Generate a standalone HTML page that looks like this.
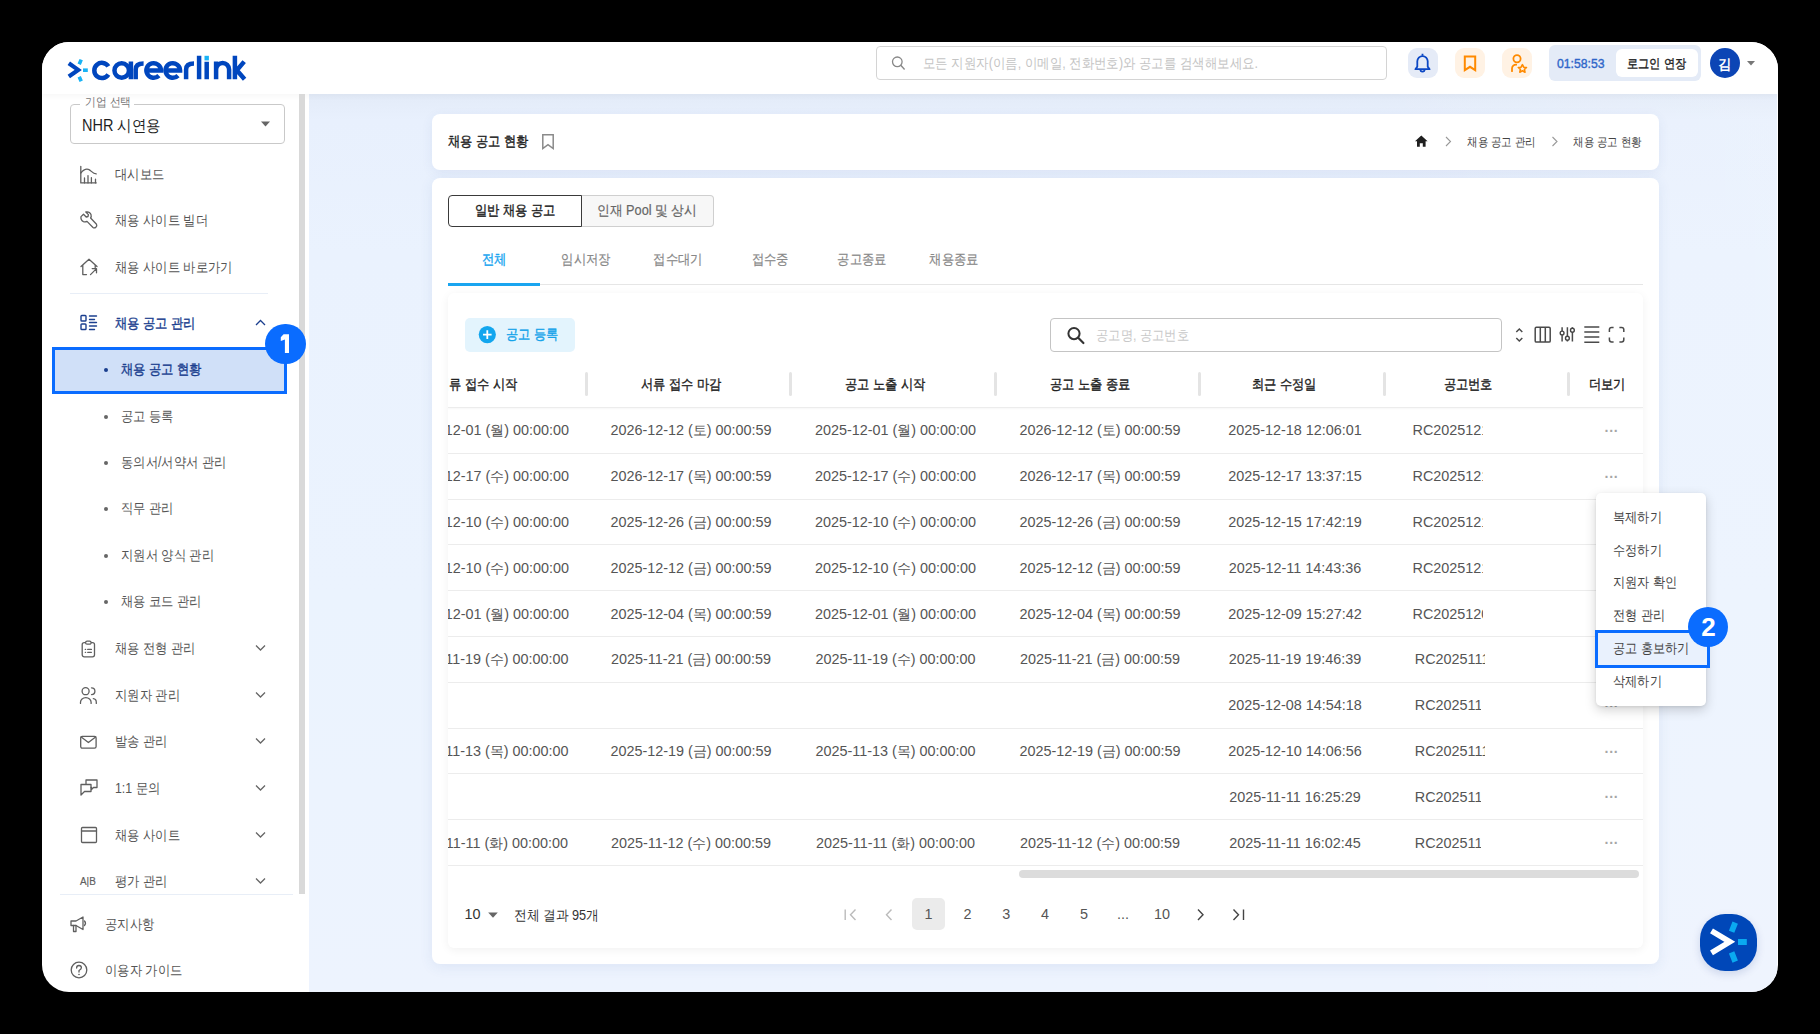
<!DOCTYPE html>
<html><head><meta charset="utf-8">
<style>
*{box-sizing:border-box;margin:0;padding:0}
html,body{width:1820px;height:1034px;overflow:hidden;background:#000}
body{font-family:"Liberation Sans",sans-serif;color:#333;position:relative}
.win{position:absolute;left:0;top:0;width:1820px;height:1034px;background:#fff;clip-path:inset(42px 42px 42px 42px round 27px)}
.a{position:absolute}
.t{position:absolute;white-space:nowrap}
svg{position:absolute;overflow:visible}
</style></head><body>
<div class="win">
<div class="a" style="left:309px;top:94px;width:1468px;height:898px;background:linear-gradient(180deg,#e3ebf8 0px,#e8f0fd 26px,#eaf2fe 160px,#ebf3fe 500px,#edf3fe 898px)"></div>
<div class="a" style="left:309px;top:94px;width:1468px;height:898px;background:linear-gradient(90deg,rgba(255,255,255,0) 0%,rgba(255,255,255,0) 70%,rgba(255,255,255,0.12) 100%)"></div>
<div class="a" style="left:42px;top:42px;width:1736px;height:52px;background:#fff;box-shadow:0 2px 6px rgba(0,0,0,0.04)"></div>
<svg style="left:60px;top:50px;" width="190" height="36" viewBox="60 50 190 36">
<path d="M68.8,63.2 L78.2,69.9 L68.8,76.4" fill="none" stroke="#0046be" stroke-width="4.2" stroke-linejoin="miter"/>
<path d="M81.2,59.6 L79.2,64.2 M79.2,76.7 L81.2,81.3" stroke="#19b3f5" stroke-width="3.6"/>
<rect x="83" y="68.4" width="4.8" height="3.6" fill="#19b3f5"/>
<g fill="none" stroke="#0046be" stroke-width="4.5">
<path d="M108.35,66.4 A7.6,7.6 0 1 0 108.35,74.5"/>
<circle cx="121.7" cy="70.45" r="7.25"/>
<path d="M130.9,61.6 V79.3"/>
<path d="M135.7,79.3 V69.5 Q135.7,63.6 143.6,63.6"/>
<path d="M146.3,70.45 H161 A7.3,7.3 0 1 0 158.9,75.6"/>
<path d="M165.4,70.45 H180.1 A7.3,7.3 0 1 0 178,75.6"/>
<path d="M186.1,79.3 V69.5 Q186.1,63.6 194,63.6"/>
<path d="M199.1,55.8 V79.3"/>
<path d="M206.7,61.8 V79.3"/>
<path d="M216.1,79.3 V61.6 M216.1,69.5 A6.5,6.5 0 0 1 229.1,69.5 V79.3"/>
<path d="M234.9,55.8 V79.3 M244.2,61.6 L236.8,70.2 L244.6,79.3"/>
</g>
<rect x="204.5" y="55.8" width="4.4" height="4.6" fill="#19b3f5"/>
</svg>
<div class="a" style="left:876px;top:46px;width:511px;height:34px;border:1px solid #d4d4d4;border-radius:4px;background:#fff"></div>
<svg style="left:890px;top:55px;" width="18" height="18" viewBox="890 55 18 18"><circle cx="897.3" cy="61.8" r="4.8" fill="none" stroke="#888" stroke-width="1.3"/><path d="M900.8,65.3 L904.6,69.4" stroke="#888" stroke-width="1.4"/></svg>
<div class="t" style="left:923px;top:54.0px;font-size:14px;line-height:18px;height:18px;font-weight:400;color:#c4c4c4;transform:scaleX(0.89);transform-origin:left center;">모든 지원자(이름, 이메일, 전화번호)와 공고를 검색해보세요.</div>
<div class="a" style="left:1408px;top:48px;width:30px;height:30px;background:#e5ebf7;border-radius:9px"></div>
<svg style="left:1408px;top:48px;" width="30" height="30" viewBox="1408 48 30 30"><path d="M1417.3,66.6 V61.2 A5.2,5.2 0 0 1 1427.7,61.2 V66.6 L1429.6,69.2 H1415.4 Z" fill="none" stroke="#0b47c4" stroke-width="1.8" stroke-linejoin="round"/><path d="M1422.5,53.8 V55.8" stroke="#0b47c4" stroke-width="1.8"/><path d="M1420.4,69.6 A2.1,2.1 0 0 0 1424.6,69.6" fill="none" stroke="#0b47c4" stroke-width="1.8"/></svg>
<div class="a" style="left:1455px;top:48px;width:30px;height:30px;background:#fff2e4;border-radius:9px"></div>
<svg style="left:1455px;top:48px;" width="30" height="30" viewBox="1455 48 30 30"><path d="M1464.8,56.6 H1475.2 V70.2 L1470,66.8 L1464.8,70.2 Z" fill="none" stroke="#ff8a00" stroke-width="2" stroke-linejoin="miter"/></svg>
<div class="a" style="left:1502px;top:48px;width:30px;height:30px;background:#fff2e4;border-radius:9px"></div>
<svg style="left:1502px;top:48px;" width="30" height="30" viewBox="1502 48 30 30"><circle cx="1517" cy="58.8" r="3.6" fill="none" stroke="#ff8a00" stroke-width="1.8"/><path d="M1512,71.2 V68.5 A4,4 0 0 1 1516.2,64.6" fill="none" stroke="#ff8a00" stroke-width="1.8" stroke-linecap="round"/><path d="M1522.4,64.6 L1523.7,67.2 L1526.5,67.5 L1524.4,69.4 L1525,72.2 L1522.4,70.8 L1519.8,72.2 L1520.4,69.4 L1518.3,67.5 L1521.1,67.2 Z" fill="none" stroke="#ff8a00" stroke-width="1.6" stroke-linejoin="round"/></svg>
<div class="a" style="left:1549px;top:45px;width:152px;height:36px;background:#e4ebf7;border-radius:6px"></div>
<div class="a" style="left:1616px;top:49px;width:82px;height:28px;background:#fff;border-radius:6px"></div>
<div class="t" style="left:1557px;top:54.5px;font-size:13px;line-height:17px;height:17px;font-weight:400;color:#2f66c9;-webkit-text-stroke:0.38px #2f66c9;transform:scaleX(0.94);transform-origin:left center;">01:58:53</div>
<div class="t" style="left:1627px;top:54.5px;font-size:13px;line-height:17px;height:17px;font-weight:400;color:#222;-webkit-text-stroke:0.38px #222;transform:scaleX(0.86);transform-origin:left center;">로그인 연장</div>
<div class="a" style="left:1710px;top:48px;width:30px;height:30px;background:#0c45b5;border-radius:50%"></div>
<div class="t" style="left:1225px;width:1000px;text-align:center;top:54.5px;font-size:14px;line-height:18px;height:18px;font-weight:700;color:#fff;transform:scaleX(0.95);transform-origin:center center;">김</div>
<svg style="left:1745px;top:58px;" width="12" height="10" viewBox="1745 58 12 10"><path d="M1747,61 L1755,61 L1751,65.5 Z" fill="#777"/></svg>
<div class="a" style="left:299px;top:94px;width:6px;height:800px;background:#d9d9d9"></div>
<div class="a" style="left:70px;top:104px;width:215px;height:40px;border:1px solid #c9c9c9;border-radius:4px"></div>
<div class="a" style="left:80px;top:102px;width:54px;height:4px;background:#fff"></div>
<div class="t" style="left:84.5px;top:93.9px;font-size:12px;line-height:16px;height:16px;font-weight:400;color:#777;transform:scaleX(0.9);transform-origin:left center;">기업 선택</div>
<div class="t" style="left:82px;top:114.5px;font-size:16px;line-height:21px;height:21px;font-weight:400;color:#1f1f1f;transform:scaleX(0.905);transform-origin:left center;">NHR 시연용</div>
<svg style="left:258px;top:118px;" width="16" height="12" viewBox="258 118 16 12"><path d="M261,121.5 L270,121.5 L265.5,126.5 Z" fill="#666"/></svg>
<svg style="left:80px;top:164.5px" width="18" height="18" viewBox="0 0 18 18"><path d="M0.8,1.3 V17.9 H16.2" fill="none" stroke="#5f5f5f" stroke-width="1.3" stroke-linecap="round" stroke-linejoin="round"/><path d="M0.8,8 C3.5,4.6 6,3.4 8.5,4.4 C11.2,5.4 12.5,8.6 16.2,8.9" fill="none" stroke="#5f5f5f" stroke-width="1.3" stroke-linecap="round" stroke-linejoin="round"/><path d="M4.5,17.9 V13 M8,17.9 V10.6 M11.4,17.9 V12.6 M15.5,17.9 V14.2" fill="none" stroke="#5f5f5f" stroke-width="1.3" stroke-linecap="round" stroke-linejoin="round"/></svg>
<div class="t" style="left:115px;top:164.5px;font-size:14px;line-height:18px;height:18px;font-weight:400;color:#555;transform:scaleX(0.88);transform-origin:left center;">대시보드</div>
<svg style="left:80px;top:211px" width="18" height="18" viewBox="0 0 18 18"><path d="M3.5,3.2 L6.2,6 L8,5.5 L8.4,3.6 L5.8,1 Q9.5,0.2 11,3.6 Q11.6,5.6 10.6,7 L16.5,13.2 Q17.4,14.8 15.8,16.4 Q14.2,17.4 13,16.5 L7,10.4 Q5.4,11.4 3.4,10.6 Q0.4,9 1,5.6 Z" fill="none" stroke="#5f5f5f" stroke-width="1.3" stroke-linecap="round" stroke-linejoin="round"/></svg>
<div class="t" style="left:115px;top:211.0px;font-size:14px;line-height:18px;height:18px;font-weight:400;color:#555;transform:scaleX(0.88);transform-origin:left center;">채용 사이트 빌더</div>
<svg style="left:80px;top:258px" width="18" height="18" viewBox="0 0 18 18"><path d="M1,8.5 L9,1.2 L17,8.5 M2.8,7 V16.6 H6.5 M15.2,7 V9.5" fill="none" stroke="#5f5f5f" stroke-width="1.3" stroke-linecap="round" stroke-linejoin="round"/><path d="M10.5,16.6 L16.5,10.6 M12.2,10.6 H16.5 V14.8" fill="none" stroke="#5f5f5f" stroke-width="1.3" stroke-linecap="round" stroke-linejoin="round"/></svg>
<div class="t" style="left:115px;top:258.0px;font-size:14px;line-height:18px;height:18px;font-weight:400;color:#555;transform:scaleX(0.88);transform-origin:left center;">채용 사이트 바로가기</div>
<div class="a" style="left:70px;top:293px;width:198px;height:1px;background:#e8eef7"></div>
<svg style="left:80px;top:314px" width="18" height="18" viewBox="0 0 18 18"><rect x="1" y="1.5" width="5" height="5.5" rx="0.8" fill="none" stroke="#1b3f8f" stroke-width="1.4" stroke-linecap="round"/><rect x="1" y="10" width="5" height="5.5" rx="0.8" fill="none" stroke="#1b3f8f" stroke-width="1.4" stroke-linecap="round"/><path d="M9.5,2 H16.5 M9.5,5.5 H14.5 M9.5,8.5 H16.5 M9.5,12 H16.5 M9.5,15.5 H14.5" fill="none" stroke="#1b3f8f" stroke-width="1.4" stroke-linecap="round"/></svg>
<div class="t" style="left:115px;top:314.0px;font-size:14px;line-height:18px;height:18px;font-weight:400;color:#1b3f8f;-webkit-text-stroke:0.38px #1b3f8f;transform:scaleX(0.88);transform-origin:left center;">채용 공고 관리</div>
<svg style="left:250px;top:315px;" width="20" height="16" viewBox="250 315 20 16"><path d="M256,325 L260.5,320.5 L265,325" fill="none" stroke="#1b3f8f" stroke-width="1.3"/></svg>
<div class="a" style="left:52px;top:347px;width:235px;height:47px;background:#d0e0f8;border:3px solid #0a6cff"></div>
<div class="a" style="left:103.5px;top:367.5px;width:4px;height:4px;background:#1b3f8f;border-radius:50%"></div>
<div class="t" style="left:121px;top:360.0px;font-size:14px;line-height:18px;height:18px;font-weight:400;color:#1b3f8f;-webkit-text-stroke:0.38px #1b3f8f;transform:scaleX(0.88);transform-origin:left center;">채용 공고 현황</div>
<div class="a" style="left:103.5px;top:414.5px;width:4px;height:4px;background:#666;border-radius:50%"></div>
<div class="t" style="left:121px;top:407.0px;font-size:14px;line-height:18px;height:18px;font-weight:400;color:#555;transform:scaleX(0.88);transform-origin:left center;">공고 등록</div>
<div class="a" style="left:103.5px;top:460.5px;width:4px;height:4px;background:#666;border-radius:50%"></div>
<div class="t" style="left:121px;top:453.0px;font-size:14px;line-height:18px;height:18px;font-weight:400;color:#555;transform:scaleX(0.88);transform-origin:left center;">동의서/서약서 관리</div>
<div class="a" style="left:103.5px;top:506.5px;width:4px;height:4px;background:#666;border-radius:50%"></div>
<div class="t" style="left:121px;top:499.0px;font-size:14px;line-height:18px;height:18px;font-weight:400;color:#555;transform:scaleX(0.88);transform-origin:left center;">직무 관리</div>
<div class="a" style="left:103.5px;top:553.5px;width:4px;height:4px;background:#666;border-radius:50%"></div>
<div class="t" style="left:121px;top:546.0px;font-size:14px;line-height:18px;height:18px;font-weight:400;color:#555;transform:scaleX(0.88);transform-origin:left center;">지원서 양식 관리</div>
<div class="a" style="left:103.5px;top:599.5px;width:4px;height:4px;background:#666;border-radius:50%"></div>
<div class="t" style="left:121px;top:592.0px;font-size:14px;line-height:18px;height:18px;font-weight:400;color:#555;transform:scaleX(0.88);transform-origin:left center;">채용 코드 관리</div>
<svg style="left:80px;top:639px" width="18" height="18" viewBox="0 0 18 18"><rect x="2.2" y="3.6" width="12.3" height="14.2" rx="2" fill="none" stroke="#5f5f5f" stroke-width="1.3" stroke-linecap="round" stroke-linejoin="round"/><rect x="5.6" y="2.2" width="5.5" height="3" rx="1.5" fill="#fff" stroke="#5f5f5f" stroke-width="1.3"/><path d="M5.3,10.4 H5.6 M7.7,10.4 H11.4 M5.3,13.3 H5.6 M7.7,13.3 H11.4" fill="none" stroke="#5f5f5f" stroke-width="1.3" stroke-linecap="round" stroke-linejoin="round"/></svg>
<div class="t" style="left:115px;top:639.0px;font-size:14px;line-height:18px;height:18px;font-weight:400;color:#555;transform:scaleX(0.88);transform-origin:left center;">채용 전형 관리</div>
<svg style="left:250px;top:640px;" width="20" height="16" viewBox="250 640 20 16"><path d="M256,645.5 L260.5,650 L265,645.5" fill="none" stroke="#666" stroke-width="1.3"/></svg>
<svg style="left:80px;top:686px" width="18" height="18" viewBox="0 0 18 18"><circle cx="5.6" cy="5.2" r="3.5" fill="none" stroke="#5f5f5f" stroke-width="1.3" stroke-linecap="round" stroke-linejoin="round"/><path d="M0.5,17.4 V16.2 A5.3,4.6 0 0 1 11.1,16.2 V17.4" fill="none" stroke="#5f5f5f" stroke-width="1.3" stroke-linecap="round" stroke-linejoin="round"/><path d="M11.5,1.8 A3.4,3.4 0 0 1 11.5,8.6 M13.3,12.6 A3.2,3.8 0 0 1 16.3,16.4 V17.4" fill="none" stroke="#5f5f5f" stroke-width="1.3" stroke-linecap="round" stroke-linejoin="round"/></svg>
<div class="t" style="left:115px;top:686.0px;font-size:14px;line-height:18px;height:18px;font-weight:400;color:#555;transform:scaleX(0.88);transform-origin:left center;">지원자 관리</div>
<svg style="left:250px;top:687px;" width="20" height="16" viewBox="250 687 20 16"><path d="M256,692.5 L260.5,697 L265,692.5" fill="none" stroke="#666" stroke-width="1.3"/></svg>
<svg style="left:80px;top:732px" width="18" height="18" viewBox="0 0 18 18"><rect x="0.7" y="4.3" width="15.4" height="11.9" rx="1.6" fill="none" stroke="#5f5f5f" stroke-width="1.3" stroke-linecap="round" stroke-linejoin="round"/><path d="M1.2,5 L8.4,10.6 L15.6,5" fill="none" stroke="#5f5f5f" stroke-width="1.3" stroke-linecap="round" stroke-linejoin="round"/></svg>
<div class="t" style="left:115px;top:732.0px;font-size:14px;line-height:18px;height:18px;font-weight:400;color:#555;transform:scaleX(0.88);transform-origin:left center;">발송 관리</div>
<svg style="left:250px;top:733px;" width="20" height="16" viewBox="250 733 20 16"><path d="M256,738.5 L260.5,743 L265,738.5" fill="none" stroke="#666" stroke-width="1.3"/></svg>
<svg style="left:80px;top:779px" width="18" height="18" viewBox="0 0 18 18"><path d="M6,5 V1 H17 V8.5 H13.5 L11.5,10.5 V8.5 H11" fill="none" stroke="#5f5f5f" stroke-width="1.3" stroke-linecap="round" stroke-linejoin="round"/><path d="M1,5.5 H11 V12.5 H4.5 L1,16 Z" fill="none" stroke="#5f5f5f" stroke-width="1.3" stroke-linecap="round" stroke-linejoin="round"/></svg>
<div class="t" style="left:115px;top:779.0px;font-size:14px;line-height:18px;height:18px;font-weight:400;color:#555;transform:scaleX(0.88);transform-origin:left center;">1:1 문의</div>
<svg style="left:250px;top:780px;" width="20" height="16" viewBox="250 780 20 16"><path d="M256,785.5 L260.5,790 L265,785.5" fill="none" stroke="#666" stroke-width="1.3"/></svg>
<svg style="left:80px;top:826px" width="18" height="18" viewBox="0 0 18 18"><rect x="1.5" y="1.5" width="15" height="15" rx="1" fill="none" stroke="#5f5f5f" stroke-width="1.3" stroke-linecap="round" stroke-linejoin="round"/><path d="M1.5,5 H16.5" fill="none" stroke="#5f5f5f" stroke-width="1.3" stroke-linecap="round" stroke-linejoin="round"/></svg>
<div class="t" style="left:115px;top:826.0px;font-size:14px;line-height:18px;height:18px;font-weight:400;color:#555;transform:scaleX(0.88);transform-origin:left center;">채용 사이트</div>
<svg style="left:250px;top:827px;" width="20" height="16" viewBox="250 827 20 16"><path d="M256,832.5 L260.5,837 L265,832.5" fill="none" stroke="#666" stroke-width="1.3"/></svg>
<div class="t" style="left:80px;top:874.0px;font-size:11px;line-height:14px;height:14px;font-weight:400;color:#5f5f5f;-webkit-text-stroke:0.2px #5f5f5f;transform:scaleX(0.9);transform-origin:left center;">A|B</div>
<div class="t" style="left:115px;top:872.0px;font-size:14px;line-height:18px;height:18px;font-weight:400;color:#555;transform:scaleX(0.88);transform-origin:left center;">평가 관리</div>
<svg style="left:250px;top:873px;" width="20" height="16" viewBox="250 873 20 16"><path d="M256,878.5 L260.5,883 L265,878.5" fill="none" stroke="#666" stroke-width="1.3"/></svg>
<div class="a" style="left:60px;top:894px;width:233px;height:1px;background:#e8eef7"></div>
<svg style="left:70px;top:915px" width="18" height="18" viewBox="0 0 18 18"><path d="M1,6 H6 L13,2 V14.5 L6,10.5 H1 Z" fill="none" stroke="#5f5f5f" stroke-width="1.3" stroke-linecap="round" stroke-linejoin="round"/><path d="M3.5,10.5 V16.5 H6 V10.5 M14.5,6 Q16.5,8.2 14.5,10.5" fill="none" stroke="#5f5f5f" stroke-width="1.3" stroke-linecap="round" stroke-linejoin="round"/></svg>
<div class="t" style="left:105px;top:915.0px;font-size:14px;line-height:18px;height:18px;font-weight:400;color:#555;transform:scaleX(0.88);transform-origin:left center;">공지사항</div>
<svg style="left:70px;top:961px" width="18" height="18" viewBox="0 0 18 18"><circle cx="9" cy="9" r="7.8" fill="none" stroke="#5f5f5f" stroke-width="1.3" stroke-linecap="round" stroke-linejoin="round"/><path d="M6.6,7 Q6.6,4.5 9,4.5 Q11.4,4.5 11.4,6.8 Q11.4,8.4 9,9.5 V11" fill="none" stroke="#5f5f5f" stroke-width="1.3" stroke-linecap="round" stroke-linejoin="round"/><circle cx="9" cy="13.4" r="0.5" fill="#5f5f5f" stroke="#5f5f5f" stroke-width="0.6"/></svg>
<div class="t" style="left:105px;top:961.0px;font-size:14px;line-height:18px;height:18px;font-weight:400;color:#555;transform:scaleX(0.88);transform-origin:left center;">이용자 가이드</div>
<div class="a" style="left:265.2px;top:323.7px;width:40.6px;height:40.6px;background:#0a6cff;border-radius:50%"></div>
<svg style="left:278px;top:332px;" width="14" height="24" viewBox="278 332 14 24"><path d="M283.6,334.2 H289 V353 H284.9 V339.6 L280.8,340.9 V337.2 Z" fill="#fff"/></svg>
<div class="a" style="left:432px;top:114px;width:1227px;height:55.5px;background:#fff;border-radius:8px;box-shadow:0 3px 12px rgba(60,90,150,0.08)"></div>
<div class="t" style="left:448px;top:132.0px;font-size:14px;line-height:18px;height:18px;font-weight:400;color:#222;-webkit-text-stroke:0.38px #222;transform:scaleX(0.875);transform-origin:left center;">채용 공고 현황</div>
<svg style="left:540px;top:132px;" width="16" height="20" viewBox="540 132 16 20"><path d="M542.8,134.8 H553.2 V148.6 L548,144.6 L542.8,148.6 Z" fill="none" stroke="#8a8a8a" stroke-width="1.5"/></svg>
<svg style="left:1412px;top:132px;" width="18" height="18" viewBox="1412 132 18 18"><path d="M1415,141.2 L1421.3,135.6 L1427.6,141.2 H1425.6 V146.8 H1422.8 V143.2 H1419.8 V146.8 H1417 V141.2 Z" fill="#1f1f1f"/></svg>
<svg style="left:1442px;top:134px;" width="12" height="14" viewBox="1442 134 12 14"><path d="M1446,137 L1450.5,141.5 L1446,146" fill="none" stroke="#999" stroke-width="1.1"/></svg>
<div class="t" style="left:1466.5px;top:133.5px;font-size:12px;line-height:16px;height:16px;font-weight:400;color:#444;transform:scaleX(0.875);transform-origin:left center;">채용 공고 관리</div>
<svg style="left:1550px;top:134px;" width="12" height="14" viewBox="1550 134 12 14"><path d="M1552.5,137 L1557,141.5 L1552.5,146" fill="none" stroke="#999" stroke-width="1.1"/></svg>
<div class="t" style="left:1573px;top:133.5px;font-size:12px;line-height:16px;height:16px;font-weight:400;color:#444;transform:scaleX(0.875);transform-origin:left center;">채용 공고 현황</div>
<div class="a" style="left:432px;top:178px;width:1227px;height:786px;background:#fff;border-radius:8px;box-shadow:0 3px 14px rgba(60,90,150,0.09)"></div>
<div class="a" style="left:581px;top:194.5px;width:132.5px;height:32.5px;background:#f7f7f7;border:1px solid #cfcfcf;border-left:none;border-radius:0 4px 4px 0"></div>
<div class="a" style="left:448px;top:194.5px;width:133.5px;height:32.5px;background:#fff;border:1.5px solid #3a3a3a;border-radius:4px 0 0 4px"></div>
<div class="t" style="left:14.5px;width:1000px;text-align:center;top:201.2px;font-size:14px;line-height:18px;height:18px;font-weight:400;color:#222;-webkit-text-stroke:0.38px #222;transform:scaleX(0.88);transform-origin:center center;">일반 채용 공고</div>
<div class="t" style="left:147.20000000000005px;width:1000px;text-align:center;top:201.2px;font-size:14px;line-height:18px;height:18px;font-weight:400;color:#666;-webkit-text-stroke:0.2px #666;transform:scaleX(0.91);transform-origin:center center;">인재 Pool 및 상시</div>
<div class="a" style="left:448px;top:284px;width:1195px;height:1px;background:#e6e6e6"></div>
<div class="a" style="left:448px;top:282.5px;width:92px;height:3px;background:#1aa5f0"></div>
<div class="t" style="left:-6px;width:1000px;text-align:center;top:249.7px;font-size:14px;line-height:18px;height:18px;font-weight:400;color:#1aa5f0;-webkit-text-stroke:0.38px #1aa5f0;transform:scaleX(0.88);transform-origin:center center;">전체</div>
<div class="t" style="left:86px;width:1000px;text-align:center;top:249.7px;font-size:14px;line-height:18px;height:18px;font-weight:400;color:#888;-webkit-text-stroke:0.2px #888;transform:scaleX(0.88);transform-origin:center center;">임시저장</div>
<div class="t" style="left:178px;width:1000px;text-align:center;top:249.7px;font-size:14px;line-height:18px;height:18px;font-weight:400;color:#888;-webkit-text-stroke:0.2px #888;transform:scaleX(0.88);transform-origin:center center;">접수대기</div>
<div class="t" style="left:270px;width:1000px;text-align:center;top:249.7px;font-size:14px;line-height:18px;height:18px;font-weight:400;color:#888;-webkit-text-stroke:0.2px #888;transform:scaleX(0.88);transform-origin:center center;">접수중</div>
<div class="t" style="left:362px;width:1000px;text-align:center;top:249.7px;font-size:14px;line-height:18px;height:18px;font-weight:400;color:#888;-webkit-text-stroke:0.2px #888;transform:scaleX(0.88);transform-origin:center center;">공고종료</div>
<div class="t" style="left:454px;width:1000px;text-align:center;top:249.7px;font-size:14px;line-height:18px;height:18px;font-weight:400;color:#888;-webkit-text-stroke:0.2px #888;transform:scaleX(0.88);transform-origin:center center;">채용종료</div>
<div class="a" style="left:448px;top:293px;width:1195px;height:655px;background:#fff;border-radius:6px;box-shadow:0 2px 10px rgba(0,0,0,0.06)"></div>
<div class="a" style="left:465px;top:318px;width:109.5px;height:34px;background:#e3f4fd;border-radius:5px"></div>
<svg style="left:478px;top:325px;" width="18" height="18" viewBox="478 325 18 18"><circle cx="487.3" cy="334.6" r="8.6" fill="#13a6ee"/><path d="M483,334.6 H491.6 M487.3,330.3 V338.9" stroke="#fff" stroke-width="1.8"/></svg>
<div class="t" style="left:505.5px;top:325.3px;font-size:14px;line-height:18px;height:18px;font-weight:400;color:#14a3ea;-webkit-text-stroke:0.38px #14a3ea;transform:scaleX(0.87);transform-origin:left center;">공고 등록</div>
<div class="a" style="left:1050px;top:318px;width:452px;height:34px;border:1px solid #c4c4c4;border-radius:4px;background:#fff"></div>
<svg style="left:1064px;top:324px;" width="24" height="24" viewBox="1064 324 24 24"><circle cx="1074" cy="333.6" r="5.6" fill="none" stroke="#333" stroke-width="2"/><path d="M1078.2,337.8 L1083.4,343" stroke="#333" stroke-width="2.2" stroke-linecap="round"/></svg>
<div class="t" style="left:1096px;top:326.0px;font-size:14px;line-height:18px;height:18px;font-weight:400;color:#c8c8c8;transform:scaleX(0.88);transform-origin:left center;">공고명, 공고번호</div>
<svg style="left:1510px;top:324px;" width="120" height="24" viewBox="1510 324 120 24">
<path d="M1516.3,332 L1519.3,329 L1522.3,332 M1516.3,338 L1519.3,341 L1522.3,338" fill="none" stroke="#4a4a4a" stroke-width="1.5"/>
<rect x="1535.2" y="327.3" width="15" height="14.8" rx="1.2" fill="none" stroke="#4a4a4a" stroke-width="1.5"/><path d="M1540.3,327.3 V342.1 M1545.3,327.3 V342.1" fill="none" stroke="#4a4a4a" stroke-width="1.5"/>
<path d="M1562.1,327.3 V341.6 M1567.4,327.3 V341.6 M1572.4,327.3 V341.6" fill="none" stroke="#4a4a4a" stroke-width="1.5"/><circle cx="1562.1" cy="333" r="1.9" fill="#fff" stroke="#444" stroke-width="1.4"/><circle cx="1567.4" cy="338.2" r="1.9" fill="#fff" stroke="#444" stroke-width="1.4"/><circle cx="1572.4" cy="330.2" r="1.9" fill="#fff" stroke="#444" stroke-width="1.4"/>
<path d="M1584.3,327 H1599.3 M1584.3,332 H1599.3 M1584.3,337.1 H1599.3 M1584.3,342.2 H1599.3" fill="none" stroke="#4a4a4a" stroke-width="1.5"/>
<path d="M1609.4,332 V329.6 Q1609.4,327.4 1611.6,327.4 H1613.6 M1619.4,327.4 H1621.6 Q1623.8,327.4 1623.8,329.6 V332 M1623.8,337.6 V339.8 Q1623.8,342 1621.6,342 H1619.4 M1613.6,342 H1611.6 Q1609.4,342 1609.4,339.8 V337.6" fill="none" stroke="#4a4a4a" stroke-width="1.5"/>
</svg>
<div class="a" style="left:584.5px;top:372px;width:3px;height:24px;background:#e4e4e4;border-radius:2px"></div>
<div class="a" style="left:789.0px;top:372px;width:3px;height:24px;background:#e4e4e4;border-radius:2px"></div>
<div class="a" style="left:993.5px;top:372px;width:3px;height:24px;background:#e4e4e4;border-radius:2px"></div>
<div class="a" style="left:1198.0px;top:372px;width:3px;height:24px;background:#e4e4e4;border-radius:2px"></div>
<div class="a" style="left:1382.5px;top:372px;width:3px;height:24px;background:#e4e4e4;border-radius:2px"></div>
<div class="a" style="left:1566.5px;top:372px;width:3px;height:24px;background:#e4e4e4;border-radius:2px"></div>
<div class="a" style="left:448px;top:407px;width:1195px;height:1px;background:#ececec;box-shadow:0 1px 2px rgba(0,0,0,0.05)"></div>
<div class="a" style="left:448px;top:360px;width:1195px;height:510px;overflow:hidden">
<div class="t" style="left:-471.5px;width:1000px;text-align:center;top:14.8px;font-size:14px;line-height:18px;height:18px;font-weight:400;color:#222;-webkit-text-stroke:0.38px #222;transform:scaleX(0.875);transform-origin:center center;">서류 접수 시작</div>
<div class="t" style="left:-267px;width:1000px;text-align:center;top:14.8px;font-size:14px;line-height:18px;height:18px;font-weight:400;color:#222;-webkit-text-stroke:0.38px #222;transform:scaleX(0.875);transform-origin:center center;">서류 접수 마감</div>
<div class="t" style="left:-63px;width:1000px;text-align:center;top:14.8px;font-size:14px;line-height:18px;height:18px;font-weight:400;color:#222;-webkit-text-stroke:0.38px #222;transform:scaleX(0.875);transform-origin:center center;">공고 노출 시작</div>
<div class="t" style="left:142px;width:1000px;text-align:center;top:14.8px;font-size:14px;line-height:18px;height:18px;font-weight:400;color:#222;-webkit-text-stroke:0.38px #222;transform:scaleX(0.875);transform-origin:center center;">공고 노출 종료</div>
<div class="t" style="left:335.5px;width:1000px;text-align:center;top:14.8px;font-size:14px;line-height:18px;height:18px;font-weight:400;color:#222;-webkit-text-stroke:0.38px #222;transform:scaleX(0.875);transform-origin:center center;">최근 수정일</div>
<div class="t" style="left:520px;width:1000px;text-align:center;top:14.8px;font-size:14px;line-height:18px;height:18px;font-weight:400;color:#222;-webkit-text-stroke:0.38px #222;transform:scaleX(0.875);transform-origin:center center;">공고번호</div>
<div class="t" style="left:658.5px;width:1000px;text-align:center;top:14.8px;font-size:14px;line-height:18px;height:18px;font-weight:400;color:#222;-webkit-text-stroke:0.38px #222;transform:scaleX(0.875);transform-origin:center center;">더보기</div>
<div class="t" style="left:-459.5px;width:1000px;text-align:center;top:61.4px;font-size:14.4px;line-height:19px;height:19px;font-weight:400;color:#555;">2025-12-01 (월) 00:00:00</div>
<div class="t" style="left:-257px;width:1000px;text-align:center;top:61.4px;font-size:14.4px;line-height:19px;height:19px;font-weight:400;color:#555;">2026-12-12 (토) 00:00:59</div>
<div class="t" style="left:-52.5px;width:1000px;text-align:center;top:61.4px;font-size:14.4px;line-height:19px;height:19px;font-weight:400;color:#555;">2025-12-01 (월) 00:00:00</div>
<div class="t" style="left:152px;width:1000px;text-align:center;top:61.4px;font-size:14.4px;line-height:19px;height:19px;font-weight:400;color:#555;">2026-12-12 (토) 00:00:59</div>
<div class="t" style="left:347px;width:1000px;text-align:center;top:61.4px;font-size:14.4px;line-height:19px;height:19px;font-weight:400;color:#555;">2025-12-18 12:06:01</div>
<div class="a" style="left:964.5px;top:60.9px;width:70px;height:20px;overflow:hidden">
<div class="t" style="left:0px;top:0.5px;font-size:14.4px;line-height:19px;height:19px;font-weight:400;color:#555;">RC2025121800001</div>
</div>
<div class="t" style="left:663.5px;width:1000px;text-align:center;top:61.9px;font-size:14px;line-height:18px;height:18px;font-weight:700;color:#a6a6a6;">···</div>
<div class="a" style="left:0px;top:92.8px;width:1195px;height:1px;background:#ececec"></div>
<div class="t" style="left:-459.5px;width:1000px;text-align:center;top:107.2px;font-size:14.4px;line-height:19px;height:19px;font-weight:400;color:#555;">2025-12-17 (수) 00:00:00</div>
<div class="t" style="left:-257px;width:1000px;text-align:center;top:107.2px;font-size:14.4px;line-height:19px;height:19px;font-weight:400;color:#555;">2026-12-17 (목) 00:00:59</div>
<div class="t" style="left:-52.5px;width:1000px;text-align:center;top:107.2px;font-size:14.4px;line-height:19px;height:19px;font-weight:400;color:#555;">2025-12-17 (수) 00:00:00</div>
<div class="t" style="left:152px;width:1000px;text-align:center;top:107.2px;font-size:14.4px;line-height:19px;height:19px;font-weight:400;color:#555;">2026-12-17 (목) 00:00:59</div>
<div class="t" style="left:347px;width:1000px;text-align:center;top:107.2px;font-size:14.4px;line-height:19px;height:19px;font-weight:400;color:#555;">2025-12-17 13:37:15</div>
<div class="a" style="left:964.5px;top:106.7px;width:70px;height:20px;overflow:hidden">
<div class="t" style="left:0px;top:0.5px;font-size:14.4px;line-height:19px;height:19px;font-weight:400;color:#555;">RC2025121700001</div>
</div>
<div class="t" style="left:663.5px;width:1000px;text-align:center;top:107.7px;font-size:14px;line-height:18px;height:18px;font-weight:700;color:#a6a6a6;">···</div>
<div class="a" style="left:0px;top:138.6px;width:1195px;height:1px;background:#ececec"></div>
<div class="t" style="left:-459.5px;width:1000px;text-align:center;top:153.0px;font-size:14.4px;line-height:19px;height:19px;font-weight:400;color:#555;">2025-12-10 (수) 00:00:00</div>
<div class="t" style="left:-257px;width:1000px;text-align:center;top:153.0px;font-size:14.4px;line-height:19px;height:19px;font-weight:400;color:#555;">2025-12-26 (금) 00:00:59</div>
<div class="t" style="left:-52.5px;width:1000px;text-align:center;top:153.0px;font-size:14.4px;line-height:19px;height:19px;font-weight:400;color:#555;">2025-12-10 (수) 00:00:00</div>
<div class="t" style="left:152px;width:1000px;text-align:center;top:153.0px;font-size:14.4px;line-height:19px;height:19px;font-weight:400;color:#555;">2025-12-26 (금) 00:00:59</div>
<div class="t" style="left:347px;width:1000px;text-align:center;top:153.0px;font-size:14.4px;line-height:19px;height:19px;font-weight:400;color:#555;">2025-12-15 17:42:19</div>
<div class="a" style="left:964.5px;top:152.5px;width:70px;height:20px;overflow:hidden">
<div class="t" style="left:0px;top:0.5px;font-size:14.4px;line-height:19px;height:19px;font-weight:400;color:#555;">RC2025121500001</div>
</div>
<div class="a" style="left:0px;top:184.4px;width:1195px;height:1px;background:#ececec"></div>
<div class="t" style="left:-459.5px;width:1000px;text-align:center;top:198.8px;font-size:14.4px;line-height:19px;height:19px;font-weight:400;color:#555;">2025-12-10 (수) 00:00:00</div>
<div class="t" style="left:-257px;width:1000px;text-align:center;top:198.8px;font-size:14.4px;line-height:19px;height:19px;font-weight:400;color:#555;">2025-12-12 (금) 00:00:59</div>
<div class="t" style="left:-52.5px;width:1000px;text-align:center;top:198.8px;font-size:14.4px;line-height:19px;height:19px;font-weight:400;color:#555;">2025-12-10 (수) 00:00:00</div>
<div class="t" style="left:152px;width:1000px;text-align:center;top:198.8px;font-size:14.4px;line-height:19px;height:19px;font-weight:400;color:#555;">2025-12-12 (금) 00:00:59</div>
<div class="t" style="left:347px;width:1000px;text-align:center;top:198.8px;font-size:14.4px;line-height:19px;height:19px;font-weight:400;color:#555;">2025-12-11 14:43:36</div>
<div class="a" style="left:964.5px;top:198.3px;width:70px;height:20px;overflow:hidden">
<div class="t" style="left:0px;top:0.5px;font-size:14.4px;line-height:19px;height:19px;font-weight:400;color:#555;">RC2025121100001</div>
</div>
<div class="a" style="left:0px;top:230.2px;width:1195px;height:1px;background:#ececec"></div>
<div class="t" style="left:-459.5px;width:1000px;text-align:center;top:244.6px;font-size:14.4px;line-height:19px;height:19px;font-weight:400;color:#555;">2025-12-01 (월) 00:00:00</div>
<div class="t" style="left:-257px;width:1000px;text-align:center;top:244.6px;font-size:14.4px;line-height:19px;height:19px;font-weight:400;color:#555;">2025-12-04 (목) 00:00:59</div>
<div class="t" style="left:-52.5px;width:1000px;text-align:center;top:244.6px;font-size:14.4px;line-height:19px;height:19px;font-weight:400;color:#555;">2025-12-01 (월) 00:00:00</div>
<div class="t" style="left:152px;width:1000px;text-align:center;top:244.6px;font-size:14.4px;line-height:19px;height:19px;font-weight:400;color:#555;">2025-12-04 (목) 00:00:59</div>
<div class="t" style="left:347px;width:1000px;text-align:center;top:244.6px;font-size:14.4px;line-height:19px;height:19px;font-weight:400;color:#555;">2025-12-09 15:27:42</div>
<div class="a" style="left:964.5px;top:244.1px;width:70px;height:20px;overflow:hidden">
<div class="t" style="left:0px;top:0.5px;font-size:14.4px;line-height:19px;height:19px;font-weight:400;color:#555;">RC2025120900001</div>
</div>
<div class="a" style="left:0px;top:276.0px;width:1195px;height:1px;background:#ececec"></div>
<div class="t" style="left:-459.5px;width:1000px;text-align:center;top:290.4px;font-size:14.4px;line-height:19px;height:19px;font-weight:400;color:#555;">2025-11-19 (수) 00:00:00</div>
<div class="t" style="left:-257px;width:1000px;text-align:center;top:290.4px;font-size:14.4px;line-height:19px;height:19px;font-weight:400;color:#555;">2025-11-21 (금) 00:00:59</div>
<div class="t" style="left:-52.5px;width:1000px;text-align:center;top:290.4px;font-size:14.4px;line-height:19px;height:19px;font-weight:400;color:#555;">2025-11-19 (수) 00:00:00</div>
<div class="t" style="left:152px;width:1000px;text-align:center;top:290.4px;font-size:14.4px;line-height:19px;height:19px;font-weight:400;color:#555;">2025-11-21 (금) 00:00:59</div>
<div class="t" style="left:347px;width:1000px;text-align:center;top:290.4px;font-size:14.4px;line-height:19px;height:19px;font-weight:400;color:#555;">2025-11-19 19:46:39</div>
<div class="a" style="left:966.8px;top:289.9px;width:70px;height:20px;overflow:hidden">
<div class="t" style="left:0px;top:0.5px;font-size:14.4px;line-height:19px;height:19px;font-weight:400;color:#555;">RC2025111900001</div>
</div>
<div class="a" style="left:0px;top:321.8px;width:1195px;height:1px;background:#ececec"></div>
<div class="t" style="left:347px;width:1000px;text-align:center;top:336.2px;font-size:14.4px;line-height:19px;height:19px;font-weight:400;color:#555;">2025-12-08 14:54:18</div>
<div class="a" style="left:966.8px;top:335.7px;width:66.5px;height:20px;overflow:hidden">
<div class="t" style="left:0px;top:0.5px;font-size:14.4px;line-height:19px;height:19px;font-weight:400;color:#555;">RC2025110800001</div>
</div>
<div class="t" style="left:663.5px;width:1000px;text-align:center;top:336.7px;font-size:14px;line-height:18px;height:18px;font-weight:700;color:#a6a6a6;">···</div>
<div class="a" style="left:0px;top:367.6px;width:1195px;height:1px;background:#ececec"></div>
<div class="t" style="left:-459.5px;width:1000px;text-align:center;top:382.0px;font-size:14.4px;line-height:19px;height:19px;font-weight:400;color:#555;">2025-11-13 (목) 00:00:00</div>
<div class="t" style="left:-257px;width:1000px;text-align:center;top:382.0px;font-size:14.4px;line-height:19px;height:19px;font-weight:400;color:#555;">2025-12-19 (금) 00:00:59</div>
<div class="t" style="left:-52.5px;width:1000px;text-align:center;top:382.0px;font-size:14.4px;line-height:19px;height:19px;font-weight:400;color:#555;">2025-11-13 (목) 00:00:00</div>
<div class="t" style="left:152px;width:1000px;text-align:center;top:382.0px;font-size:14.4px;line-height:19px;height:19px;font-weight:400;color:#555;">2025-12-19 (금) 00:00:59</div>
<div class="t" style="left:347px;width:1000px;text-align:center;top:382.0px;font-size:14.4px;line-height:19px;height:19px;font-weight:400;color:#555;">2025-12-10 14:06:56</div>
<div class="a" style="left:966.8px;top:381.5px;width:70px;height:20px;overflow:hidden">
<div class="t" style="left:0px;top:0.5px;font-size:14.4px;line-height:19px;height:19px;font-weight:400;color:#555;">RC2025111300001</div>
</div>
<div class="t" style="left:663.5px;width:1000px;text-align:center;top:382.5px;font-size:14px;line-height:18px;height:18px;font-weight:700;color:#a6a6a6;">···</div>
<div class="a" style="left:0px;top:413.4px;width:1195px;height:1px;background:#ececec"></div>
<div class="t" style="left:347px;width:1000px;text-align:center;top:427.8px;font-size:14.4px;line-height:19px;height:19px;font-weight:400;color:#555;">2025-11-11 16:25:29</div>
<div class="a" style="left:966.8px;top:427.3px;width:66.5px;height:20px;overflow:hidden">
<div class="t" style="left:0px;top:0.5px;font-size:14.4px;line-height:19px;height:19px;font-weight:400;color:#555;">RC2025111100002</div>
</div>
<div class="t" style="left:663.5px;width:1000px;text-align:center;top:428.3px;font-size:14px;line-height:18px;height:18px;font-weight:700;color:#a6a6a6;">···</div>
<div class="a" style="left:0px;top:459.2px;width:1195px;height:1px;background:#ececec"></div>
<div class="t" style="left:-459.5px;width:1000px;text-align:center;top:473.6px;font-size:14.4px;line-height:19px;height:19px;font-weight:400;color:#555;">2025-11-11 (화) 00:00:00</div>
<div class="t" style="left:-257px;width:1000px;text-align:center;top:473.6px;font-size:14.4px;line-height:19px;height:19px;font-weight:400;color:#555;">2025-11-12 (수) 00:00:59</div>
<div class="t" style="left:-52.5px;width:1000px;text-align:center;top:473.6px;font-size:14.4px;line-height:19px;height:19px;font-weight:400;color:#555;">2025-11-11 (화) 00:00:00</div>
<div class="t" style="left:152px;width:1000px;text-align:center;top:473.6px;font-size:14.4px;line-height:19px;height:19px;font-weight:400;color:#555;">2025-11-12 (수) 00:00:59</div>
<div class="t" style="left:347px;width:1000px;text-align:center;top:473.6px;font-size:14.4px;line-height:19px;height:19px;font-weight:400;color:#555;">2025-11-11 16:02:45</div>
<div class="a" style="left:966.8px;top:473.1px;width:66.5px;height:20px;overflow:hidden">
<div class="t" style="left:0px;top:0.5px;font-size:14.4px;line-height:19px;height:19px;font-weight:400;color:#555;">RC2025111100001</div>
</div>
<div class="t" style="left:663.5px;width:1000px;text-align:center;top:474.1px;font-size:14px;line-height:18px;height:18px;font-weight:700;color:#a6a6a6;">···</div>
<div class="a" style="left:0px;top:505.0px;width:1195px;height:1px;background:#ececec"></div>
</div>
<div class="a" style="left:1018.5px;top:870px;width:620px;height:8px;background:#dcdcdc;border-radius:4px"></div>
<div class="t" style="left:464.5px;top:905.0px;font-size:14.4px;line-height:19px;height:19px;font-weight:400;color:#333;">10</div>
<svg style="left:486px;top:910px;" width="14" height="10" viewBox="486 910 14 10"><path d="M488.2,912.6 L497.8,912.6 L493,917.8 Z" fill="#666"/></svg>
<div class="t" style="left:514px;top:905.5px;font-size:14px;line-height:18px;height:18px;font-weight:400;color:#333;transform:scaleX(0.91);transform-origin:left center;">전체 결과 95개</div>
<div class="a" style="left:912.2px;top:898.3px;width:32.4px;height:32.2px;background:#ebebeb;border-radius:5px"></div>
<svg style="left:840px;top:904px;" width="400" height="20" viewBox="840 904 400 20">
<path d="M845.2,909.5 V920 M855.5,909.5 L850.5,914.75 L855.5,920" stroke="#bbb" fill="none" stroke-width="1.4"/>
<path d="M891.5,909.5 L886.5,914.75 L891.5,920" stroke="#bbb" fill="none" stroke-width="1.4"/>
<path d="M1198,909.5 L1203,914.75 L1198,920" stroke="#444" fill="none" stroke-width="1.4" stroke-width="1.6"/>
<path d="M1233.5,909.5 L1238.5,914.75 L1233.5,920 M1243.5,909.5 V920" stroke="#444" fill="none" stroke-width="1.4" stroke-width="1.6"/>
</svg>
<div class="t" style="left:428.4px;width:1000px;text-align:center;top:905.0px;font-size:14.4px;line-height:19px;height:19px;font-weight:400;color:#555;">1</div>
<div class="t" style="left:467.5px;width:1000px;text-align:center;top:905.0px;font-size:14.4px;line-height:19px;height:19px;font-weight:400;color:#555;">2</div>
<div class="t" style="left:506.20000000000005px;width:1000px;text-align:center;top:905.0px;font-size:14.4px;line-height:19px;height:19px;font-weight:400;color:#555;">3</div>
<div class="t" style="left:545px;width:1000px;text-align:center;top:905.0px;font-size:14.4px;line-height:19px;height:19px;font-weight:400;color:#555;">4</div>
<div class="t" style="left:584px;width:1000px;text-align:center;top:905.0px;font-size:14.4px;line-height:19px;height:19px;font-weight:400;color:#555;">5</div>
<div class="t" style="left:623px;width:1000px;text-align:center;top:905.0px;font-size:14.4px;line-height:19px;height:19px;font-weight:400;color:#555;">...</div>
<div class="t" style="left:662px;width:1000px;text-align:center;top:905.0px;font-size:14.4px;line-height:19px;height:19px;font-weight:400;color:#555;">10</div>
<div class="a" style="left:1596.3px;top:493.2px;width:109.7px;height:212.5px;background:#fff;border-radius:5px;box-shadow:0 4px 12px rgba(0,0,0,0.18),0 1px 3px rgba(0,0,0,0.08)"></div>
<div class="a" style="left:1595px;top:629.9px;width:114.5px;height:37.8px;background:#e9f1fd;border:3px solid #0a6cff"></div>
<div class="t" style="left:1612.5px;top:508.0px;font-size:14px;line-height:18px;height:18px;font-weight:400;color:#444;transform:scaleX(0.87);transform-origin:left center;">복제하기</div>
<div class="t" style="left:1612.5px;top:540.7px;font-size:14px;line-height:18px;height:18px;font-weight:400;color:#444;transform:scaleX(0.87);transform-origin:left center;">수정하기</div>
<div class="t" style="left:1612.5px;top:573.2px;font-size:14px;line-height:18px;height:18px;font-weight:400;color:#444;transform:scaleX(0.87);transform-origin:left center;">지원자 확인</div>
<div class="t" style="left:1612.5px;top:605.8px;font-size:14px;line-height:18px;height:18px;font-weight:400;color:#444;transform:scaleX(0.87);transform-origin:left center;">전형 관리</div>
<div class="t" style="left:1612.5px;top:639.4px;font-size:14px;line-height:18px;height:18px;font-weight:400;color:#444;transform:scaleX(0.87);transform-origin:left center;">공고 홍보하기</div>
<div class="t" style="left:1612.5px;top:672.0px;font-size:14px;line-height:18px;height:18px;font-weight:400;color:#444;transform:scaleX(0.87);transform-origin:left center;">삭제하기</div>
<div class="a" style="left:1688.2px;top:607px;width:40px;height:40px;background:#0a6cff;border-radius:50%"></div>
<div class="t" style="left:1208.4px;width:1000px;text-align:center;top:610.0px;font-size:26px;line-height:34px;height:34px;font-weight:700;color:#fff;">2</div>
<div class="a" style="left:1700px;top:914px;width:57px;height:57px;background:#0047b8;border-radius:44%;box-shadow:0 3px 8px rgba(0,40,120,0.15)"></div>
<svg style="left:1700px;top:914px;" width="57" height="57" viewBox="1700 914 57 57">
<path d="M1711.5,930.8 L1729.8,941.8 L1711.5,952.8" fill="none" stroke="#fff" stroke-width="5.6" stroke-linejoin="miter"/>
<path d="M1735.2,922.6 L1731.6,931.8 M1731.6,952.4 L1735.2,961.6" stroke="#0aa9f0" stroke-width="5.8"/>
<rect x="1738" y="939" width="8.8" height="6" fill="#0aa9f0"/>
</svg>
</div></body></html>
